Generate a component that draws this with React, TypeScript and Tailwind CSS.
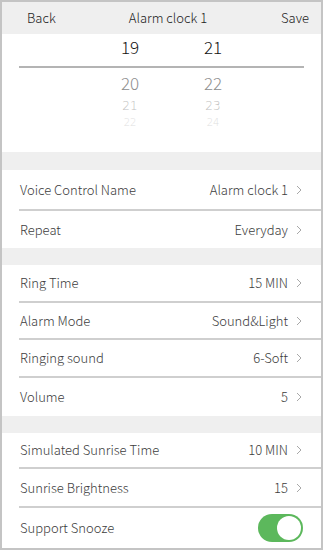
const font = { fontFamily: '"Noto Sans CJK SC", "Noto Sans", sans-serif' };

function Chevron() {
  return (
    <svg width="6" height="10" viewBox="0 0 6 10" className="ml-[8px] shrink-0">
      <polyline points="1,1 5,5 1,9" fill="none" stroke="#a8a8a8" strokeWidth="1" />
    </svg>
  );
}

function Row({
  label,
  value,
  h,
  divider = true,
  children,
}: {
  label: string;
  value?: string;
  h: string;
  divider?: boolean;
  children?: React.ReactNode;
}) {
  return (
    <div className={`${h} pl-[17px] bg-white`}>
      <div
        className={`h-full flex items-center justify-between pr-[19px] ${
          divider ? "border-b-2 border-[#cfcfcf]" : ""
        }`}
      >
        <span className="pl-px text-[13px] text-[#3c3c3c]">{label}</span>
        {children ?? (
          <span className="flex items-center text-[13px] text-[#3c3c3c]">
            {value}
            <Chevron />
          </span>
        )}
      </div>
    </div>
  );
}

function Band({ h }: { h: string }) {
  return <div className={`${h} bg-[#efefef]`} />;
}

export default function App() {
  return (
    <div
      className="w-[323px] h-[550px] border-2 border-[#c4c4c4] bg-white overflow-hidden flex flex-col font-light"
      style={font}
    >
      {/* Header */}
      <div className="h-[32px] shrink-0 bg-[#efefef] grid grid-cols-[1fr_auto_1fr] items-center pl-[25px] pr-[12px] text-[13px] text-[#222]">
        <span>Back</span>
        <span>Alarm clock 1</span>
        <span className="text-right">Save</span>
      </div>

      {/* Time picker */}
      <div className="h-[118px] shrink-0 bg-white">
        <div className="flex pl-[108px] gap-[43px] h-[26px] items-center text-[17px] text-[#111]">
          <span className="w-[40px] text-center">19</span>
          <span className="w-[40px] text-center">21</span>
        </div>
        <div className="ml-[17px] mr-[17px] mt-[6px] h-[2px] bg-[#b4b4b4]" />
        <div className="flex pl-[108px] gap-[43px] h-[26px] mt-[2px] items-center text-[17px] text-[#8e8e8e]">
          <span className="w-[40px] text-center">20</span>
          <span className="w-[40px] text-center">22</span>
        </div>
        <div
          className="flex pl-[108px] gap-[43px] h-[20px] items-center text-[12px] text-[#c0c0c0]"
          style={{ fontFamily: '"DejaVu Sans", sans-serif' }}
        >
          <span className="w-[40px] text-center">21</span>
          <span className="w-[40px] text-center">23</span>
        </div>
        <div
          className="flex pl-[108px] gap-[43px] h-[13px] items-center text-[10px] leading-[13px] text-[#e0e0e0]"
          style={{ fontFamily: '"DejaVu Sans", sans-serif' }}
        >
          <span className="w-[40px] text-center">22</span>
          <span className="w-[40px] text-center">24</span>
        </div>
      </div>

      <Band h="h-[18px] shrink-0" />
      <Row h="h-[41px] shrink-0" label="Voice Control Name" value="Alarm clock 1" />
      <Row h="h-[37px] shrink-0" label="Repeat" value="Everyday" divider={false} />
      <Band h="h-[17px] shrink-0" />
      <Row h="h-[38px] shrink-0" label="Ring Time" value="15 MIN" />
      <Row h="h-[37px] shrink-0" label="Alarm Mode" value="Sound&Light" />
      <Row h="h-[38px] shrink-0" label="Ringing sound" value="6-Soft" />
      <Row h="h-[38px] shrink-0" label="Volume" value="5" divider={false} />
      <Band h="h-[17px] shrink-0" />
      <Row h="h-[36px] shrink-0" label="Simulated Sunrise Time" value="10 MIN" />
      <Row h="h-[39px] shrink-0" label="Sunrise Brightness" value="15" />
      <Row h="flex-1" label="Support Snooze" divider={false}>
        <div className="w-[45px] h-[28px] rounded-full bg-[#5cb85c] flex items-center justify-end pr-[2px] mr-[-1px]">
          <div className="w-[24px] h-[24px] rounded-full bg-white" />
        </div>
      </Row>
    </div>
  );
}
